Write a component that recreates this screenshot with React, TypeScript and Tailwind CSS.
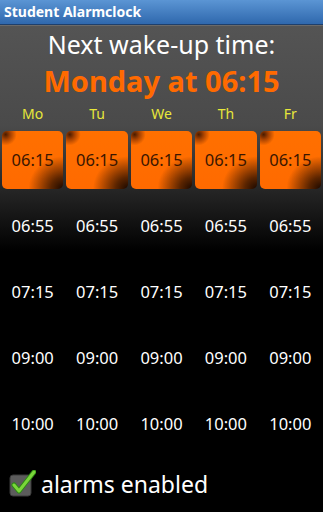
const days = ['Mo', 'Tu', 'We', 'Th', 'Fr'];
const times = ['06:55', '07:15', '09:00', '10:00'];

function AlarmButton({ label }: { label: string }) {
  return (
    <div className="flex h-[58px] items-center justify-center rounded-[5px] bg-[radial-gradient(circle_at_6%_6%,#4a1c00_0px,#a84200_5px,transparent_11px),radial-gradient(ellipse_at_100%_100%,#1a0800_0%,#5a2400_14%,transparent_40%),linear-gradient(#ff7000,#ff6a00)] text-[16.5px] text-[#3a1600]">
      {label}
    </div>
  );
}

export default function App() {
  return (
    <div className="flex h-[512px] w-[323px] flex-col overflow-hidden bg-black font-['Noto_Sans','Open_Sans',sans-serif]">
      <div className="flex h-[25px] items-center border-b border-[#1e3f6b] bg-[linear-gradient(#5b95d4,#2f68ad)] px-[4px]">
        <span className="text-[14px] font-bold leading-none text-white">Student Alarmclock</span>
      </div>
      <div className="flex flex-1 flex-col border-t border-[#6a6a6a] bg-[linear-gradient(#545454_0px,#4a4a4a_100px,#222_170px,#000_225px)] px-[2px]">
        <div className="mt-[2px] text-center text-[25px] leading-[32px] text-white">Next wake-up time:</div>
        <div className="mt-[4px] text-center text-[29px] font-bold leading-[34px] text-[#ff6a00]">Monday at 06:15</div>
        <div className="mt-[6px] grid grid-cols-5 gap-[3px]">
          {days.map((d) => (
            <div key={d} className="text-center text-[14px] leading-[20px] text-[#e8e83a]">
              {d}
            </div>
          ))}
        </div>
        <div className="mt-[7px] grid grid-cols-5 gap-x-[3px] gap-y-[8px]">
          {days.map((d) => (
            <AlarmButton key={d} label="06:15" />
          ))}
          {times.map((t) =>
            days.map((d) => (
              <div key={t + d} className="flex h-[58px] items-center justify-center text-[16.5px] text-white">
                {t}
              </div>
            ))
          )}
        </div>
        <div className="mt-[17px] flex items-center gap-[5px] pl-[7px]">
          <svg width="27" height="28" viewBox="0 0 27 28">
            <rect x="1" y="5" width="21" height="21" rx="3" fill="#5c5c5c" stroke="#3a3a3a" />
            <path d="M5 15 L10 21 L25 2" fill="none" stroke="#2b8a12" strokeWidth="5" strokeLinecap="round" strokeLinejoin="round" />
            <path d="M5 15 L10 21 L25 2" fill="none" stroke="#7ad63a" strokeWidth="3" strokeLinecap="round" strokeLinejoin="round" />
          </svg>
          <span className="text-[23px] leading-none text-white">alarms enabled</span>
        </div>
      </div>
    </div>
  );
}
